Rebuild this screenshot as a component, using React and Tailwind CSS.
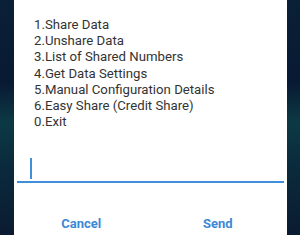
import React from "react";

export default function App() {
  const items = [
    "1.Share Data",
    "2.Unshare Data",
    "3.List of Shared Numbers",
    "4.Get Data Settings",
    "5.Manual Configuration Details",
    "6.Easy Share (Credit Share)",
    "0.Exit",
  ];

  return (
    <div className="w-[300px] h-[235px] overflow-hidden flex bg-[linear-gradient(180deg,#0a2037_0%,#081a33_35%,#0c3944_52%,#0a2b3d_70%,#0b1b31_100%)] font-[Roboto,sans-serif]">
      <div className="ml-[14px] mr-[13px] flex-1 bg-white flex flex-col">
        {/* USSD menu text */}
        <div className="pl-[20px] pt-[17px] text-[13.2px] leading-[16.2px] text-[#333333]">
          {items.map((item, i) => (
            <div key={i}>{item}</div>
          ))}
        </div>

        {/* input */}
        <div className="mt-[28px] mx-[3px] h-[25px] border-b-2 border-[#3f8fdb] flex items-start">
          <div className="ml-[13px] w-[2px] h-[21px] bg-[#3f8fdb]" />
        </div>

        {/* actions */}
        <div className="mt-[31px] flex text-[13px] font-bold text-[#3b89d6]">
          <div className="w-1/2 text-center pr-[2px]">Cancel</div>
          <div className="w-1/2 text-center pr-[2px]">Send</div>
        </div>
      </div>
    </div>
  );
}
